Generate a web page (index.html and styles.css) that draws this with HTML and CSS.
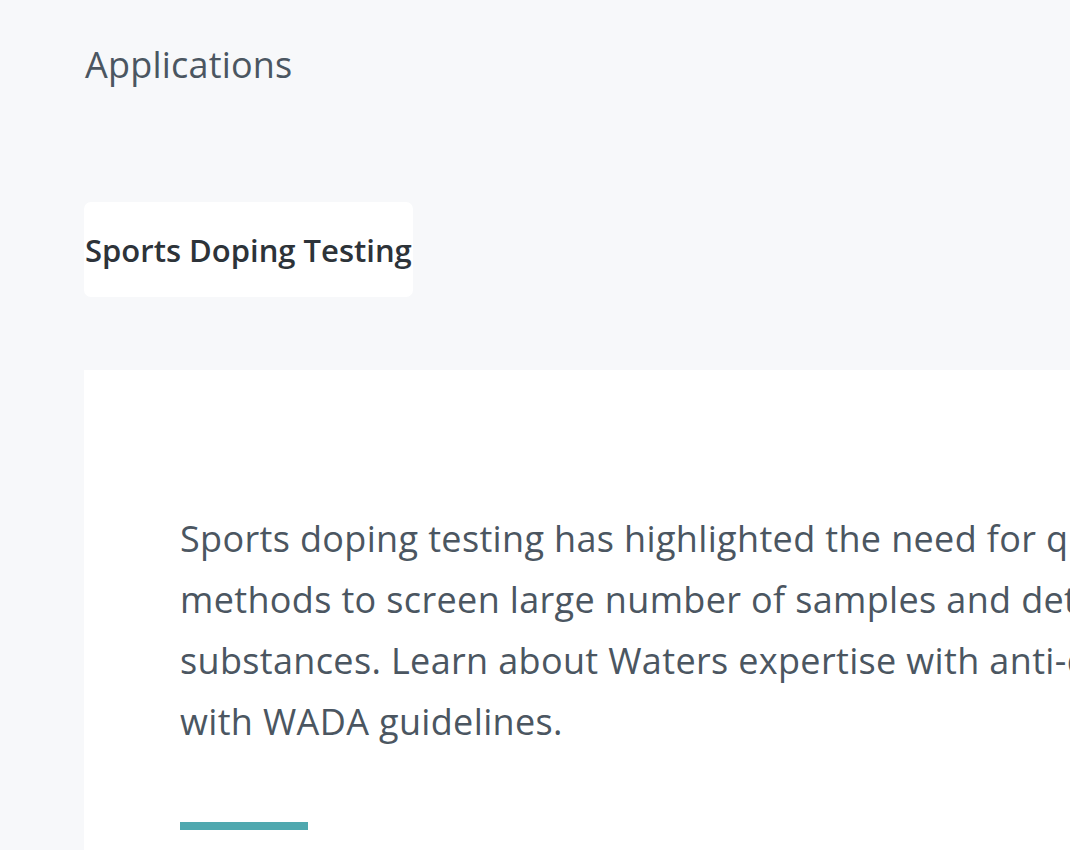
FILE: index.html
```html
<!DOCTYPE html>
<html lang="en">
<head>
<meta charset="utf-8">
<title>Applications</title>
<link rel="stylesheet" href="styles.css">
</head>
<body>
<main class="page">
  <h2 class="section-title">Applications</h2>
  <div class="tabs">
    <button class="tab">Sports Doping Testing</button>
  </div>
  <section class="card">
    <p class="card-text">Sports doping testing has highlighted the need for quick and reliable analytical<br>methods to screen large number of samples and detect a wide range of prohibited<br>substances. Learn about Waters expertise with anti-doping testing in accordance<br>with WADA guidelines.</p>
    <div class="accent"></div>
  </section>
</main>
</body>
</html>
```
FILE: styles.css
```css
html, body {
  margin: 0;
  padding: 0;
  overflow: hidden;
  background: #f7f8fa;
}
body {
  font-family: "Open Sans", Lato, sans-serif;
  width: 1070px;
  height: 850px;
}
.page {
  padding: 0 0 0 84px;
  width: 1800px;
}
.section-title {
  margin: 0;
  padding-top: 42px;
  font-size: 36px;
  line-height: 46px;
  font-weight: 400;
  color: #4b5661;
  letter-spacing: 0.2px;
  padding-left: 1px;
}
.tabs {
  display: flex;
  margin-top: 114px;
}
.tab {
  font-family: inherit;
  border: none;
  background: #ffffff;
  border-radius: 7px;
  height: 95px;
  padding: 0 1px;
  font-size: 31px;
  font-weight: 600;
  color: #2d3339;
}
.card {
  margin-top: 73px;
  background: #ffffff;
  padding: 138px 0 0 96px;
  min-height: 600px;
}
.card-text {
  margin: 0;
  white-space: nowrap;
  font-size: 36px;
  line-height: 61px;
  letter-spacing: 0.35px;
  color: #4b5661;
}
.accent {
  margin-top: 70px;
  width: 128px;
  height: 8px;
  background: #4fa8af;
}
```
